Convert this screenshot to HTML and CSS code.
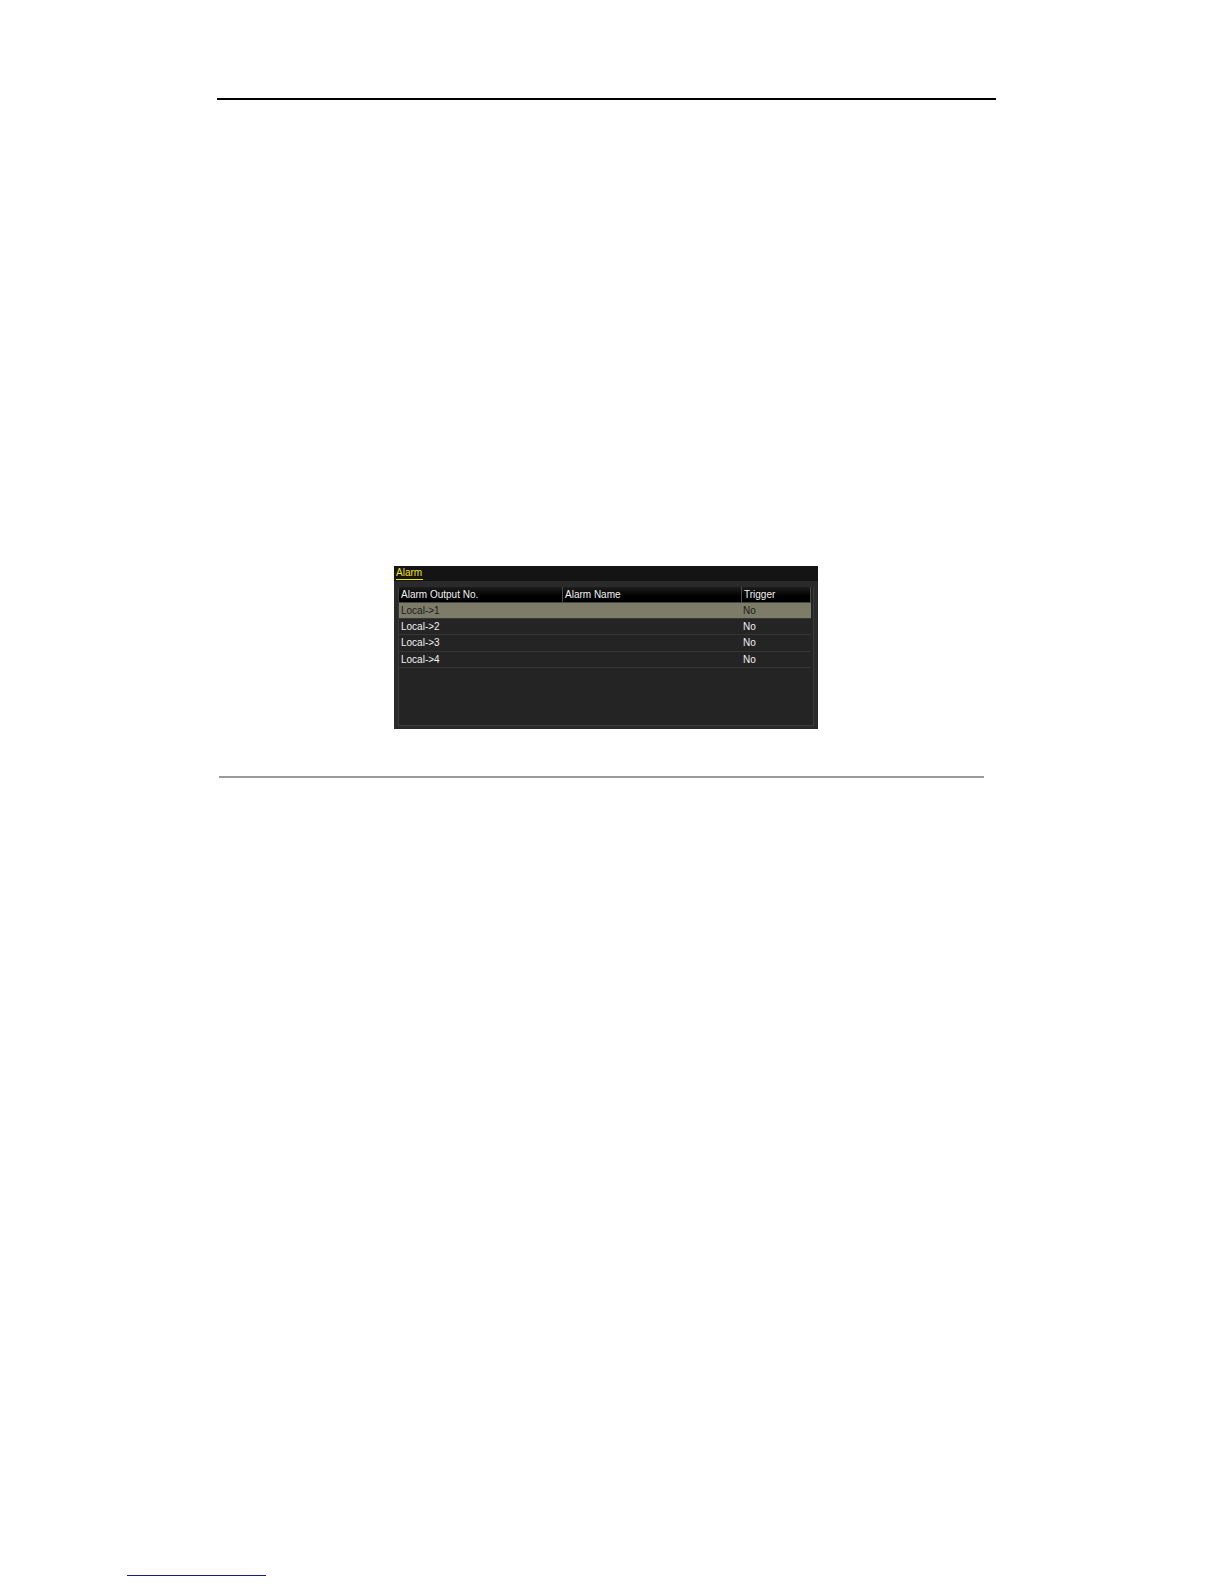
FILE: index.html
```html
<!DOCTYPE html>
<html>
<head>
<meta charset="utf-8">
<link rel="stylesheet" href="styles.css">
</head>
<body>
<div class="page">
  <div class="top-rule"></div>
  <div class="figure">
    <div class="dvr">
      <div class="titlebar"><span class="tab">Alarm</span></div>
      <div class="panel">
        <div class="row head">
          <div class="c1">Alarm Output No.</div>
          <div class="c2">Alarm Name</div>
          <div class="c3">Trigger</div>
        </div>
        <div class="row sel">
          <div class="c1">Local-&gt;1</div>
          <div class="c2"></div>
          <div class="c3">No</div>
        </div>
        <div class="row">
          <div class="c1">Local-&gt;2</div>
          <div class="c2"></div>
          <div class="c3">No</div>
        </div>
        <div class="row">
          <div class="c1">Local-&gt;3</div>
          <div class="c2"></div>
          <div class="c3">No</div>
        </div>
        <div class="row">
          <div class="c1">Local-&gt;4</div>
          <div class="c2"></div>
          <div class="c3">No</div>
        </div>
      </div>
    </div>
  </div>
  <div class="bottom-rule"></div>
  <div class="footer"><a class="foot-link" href="#">&nbsp;</a></div>
</div>
</body>
</html>
```
FILE: styles.css
```css
html, body {
  margin: 0;
  padding: 0;
  background: #ffffff;
  overflow: hidden;
}
.page {
  width: 1224px;
  height: 1580px;
  overflow: hidden;
  font-family: "Liberation Sans", Arial, sans-serif;
  display: flex;
  flex-direction: column;
}
.top-rule {
  margin-top: 98px;
  margin-left: 217px;
  width: 779px;
  height: 1.5px;
  background: #000;
  flex: none;
}
.figure {
  margin-top: 466px;
  margin-left: 394px;
  width: 424px;
  flex: none;
}
.dvr {
  background: #2a2a2a;
  height: 163px;
  display: flex;
  flex-direction: column;
}
.titlebar {
  height: 15px;
  background: #141414;
  padding-left: 2px;
  display: flex;
  align-items: center;
}
.tab {
  color: #f0e600;
  font-size: 10px;
  line-height: 12px;
  border-bottom: 1px solid #f0e600;
  padding-right: 1px;
}
.panel {
  margin: 6px 4px 3px 4px;
  flex: 1;
  background: #242424;
  border: 1px solid #3a3a3a;
  border-top: none;
}
.row {
  display: grid;
  grid-template-columns: 163px 179px 1fr;
  height: 15.3px;
  border-bottom: 1px solid #363636;
  color: #f2f2f2;
  font-size: 10px;
  line-height: 15px;
  margin-right: 2px;
}
.row > div {
  padding-left: 2px;
  white-space: nowrap;
  overflow: hidden;
}
.head {
  background: linear-gradient(#1e1e1e, #000 60%);
  border-bottom: 1px solid #444;
}
.head .c2, .head .c3 {
  border-left: 1px solid #4a4a4a;
}
.head .c3 {
  border-right: 1px solid #4a4a4a;
}
.sel {
  background: #7d7c68;
  color: #1a1a1a;
}
.bottom-rule {
  margin-top: 47px;
  margin-left: 219px;
  width: 765px;
  height: 2px;
  background: #9a9a9a;
  flex: none;
}
.footer {
  margin-top: auto;
  margin-left: 127px;
  margin-bottom: 4px;
  flex: none;
}
.foot-link {
  display: block;
  width: 139px;
  height: 1px;
  background: #1a1a8c;
  text-decoration: none;
  font-size: 0;
}
```
